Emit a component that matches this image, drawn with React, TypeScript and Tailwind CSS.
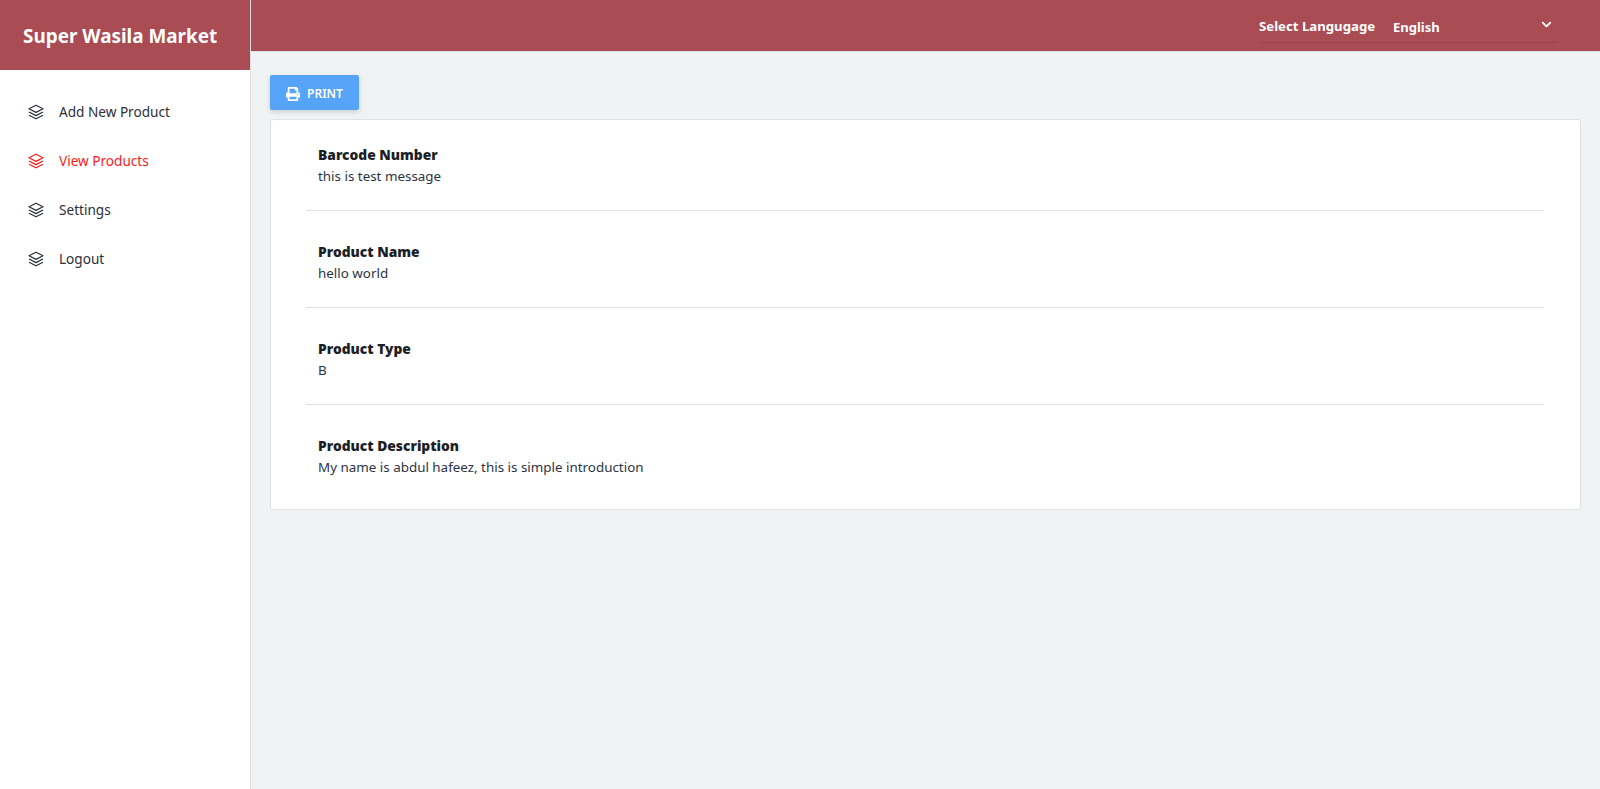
import { FaPrint } from "react-icons/fa";
import { ChevronDown } from "lucide-react";

const menu = [
  { label: "Add New Product", active: false },
  { label: "View Products", active: true },
  { label: "Settings", active: false },
  { label: "Logout", active: false },
];

const fields = [
  { title: "Barcode Number", value: "this is test message" },
  { title: "Product Name", value: "hello world" },
  { title: "Product Type", value: "B" },
  { title: "Product Description", value: "My name is abdul hafeez, this is simple introduction" },
];

const LayersIcon = () => (
  <svg width="16" height="16" viewBox="0 0 16 16" fill="none" stroke="currentColor" strokeWidth="1.2" strokeLinejoin="round">
    <path d="M8 1.2 15 4.8 8 8.4 1 4.8Z" />
    <path d="M1 8 8 11.6 15 8" />
    <path d="M1 11.2 8 14.8 15 11.2" />
  </svg>
);

export default function App() {
  return (
    <div className="flex min-h-[789px] bg-[#eff3f4] font-['Noto_Sans',sans-serif] text-[13.4px] text-[#2b3445]">
      <aside className="w-[251px] shrink-0 border-r border-[#dcdfe2] bg-white">
        <div className="flex h-[70px] items-center bg-[#aa4c54] pt-[3px] pl-[23px] text-[18.9px] leading-none font-bold text-white">
          Super Wasila Market
        </div>
        <nav className="pt-[17px]">
          {menu.map((item) => (
            <div
              key={item.label}
              className={`flex h-[49px] items-center gap-[15px] pl-[28px] text-[13.6px] ${item.active ? "text-[#ff1a1a]" : "text-[#2b2f38]"}`}
            >
              <LayersIcon />
              <span className="pt-[2px]">{item.label}</span>
            </div>
          ))}
        </nav>
      </aside>

      <div className="flex min-w-0 flex-1 flex-col">
        <header className="flex h-[52px] items-start justify-end border-b border-[#dcdfe2] bg-[#aa4c54] pr-[42px] text-white">
          <div className="flex h-[43px] w-[299px] items-center border-b border-[#9a444c] pt-[9px] text-[13px]">
            <span className="w-[134px] pt-[2px] text-[13.2px] font-bold">Select Langugage</span>
            <span className="flex-1 pt-[4px] font-bold">English</span>
            <ChevronDown className="mr-[4px] mb-[2px] h-[15px] w-[15px]" strokeWidth={3} />
          </div>
        </header>

        <main className="px-[19px] pt-[23px]">
          <button className="flex h-[35px] w-[89px] items-center justify-center gap-[7px] rounded-[2px] bg-[#55a4f8] pt-[3px] text-[12px] font-semibold text-white shadow-[0_2px_5px_rgba(0,0,0,0.15)]">
            <FaPrint className="h-[14px] w-[14px]" />
            PRINT
          </button>
          <section className="mt-[9px] h-[391px] w-[1311px] rounded-[3px] border border-[#dfe3e6] bg-white pr-[36px] pl-[35px]">
            {fields.map((field, i) => (
              <div
                key={field.title}
                className={`pl-[12px] ${i === 0 ? "pt-[24px]" : "pt-[30px]"} ${i < fields.length - 1 ? "border-b border-[#dfe2e5] pb-[23px]" : ""}`}
              >
                <h4 className="text-[13.8px] leading-[21px] font-black text-[#1c1f26]">{field.title}</h4>
                <p className="mt-[1px] leading-[21px]">{field.value}</p>
              </div>
            ))}
          </section>
        </main>
      </div>
    </div>
  );
}
